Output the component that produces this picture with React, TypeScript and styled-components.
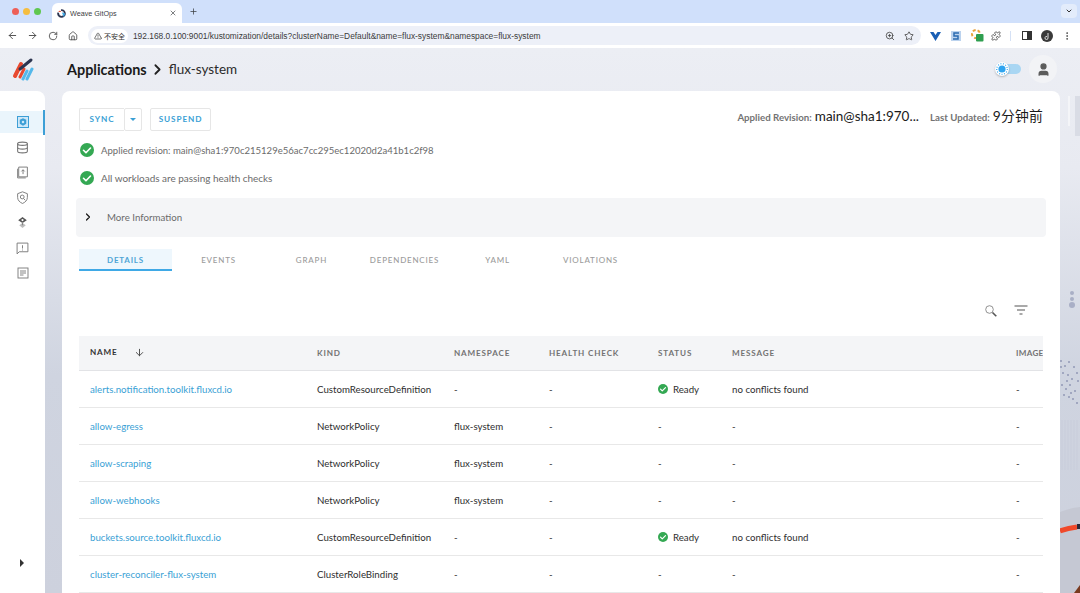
import styled, { createGlobalStyle } from "styled-components";
import {
  ArrowDown,
  ArrowLeft,
  ArrowRight,
  ChevronDown,
  ChevronRight,
  Database,
  Home,
  MoreVertical,
  Plus,
  RotateCw,
  Star,
  TriangleAlert,
  User,
  X,
  ZoomIn,
  Puzzle,
} from "lucide-react";

const GlobalStyle = createGlobalStyle`
html, body {
  margin: 0;
  padding: 0;
  width: 1080px;
  height: 593px;
  overflow: hidden;
  background: #e9ebf2;
}
* { box-sizing: border-box; }
`;

const Window = styled.div`
  width: 1080px;
  height: 593px;
  display: flex;
  flex-direction: column;
  overflow: hidden;
  font-family: "Lato", "Noto Sans CJK SC", sans-serif;
  color: #1a1a1a;
`;

const TabStrip = styled.div`
  height: 23px;
  flex: none;
  background: #d0e0fb;
  display: flex;
  align-items: flex-end;
  padding-left: 12px;
  position: relative;
`;

const Light = styled.span<{ $c: string }>`
  width: 7px;
  height: 7px;
  border-radius: 50%;
  background: ${(p) => p.$c};
  margin-right: 4px;
  align-self: center;
  flex: none;
`;

const ActiveTab = styled.div`
  width: 130px;
  height: 20px;
  margin-left: 7px;
  background: #fff;
  border-radius: 6px 6px 0 0;
  display: flex;
  align-items: center;
  padding: 0 5px 0 5px;
  font-family: "Liberation Sans", sans-serif;
  font-size: 7.2px;
  color: #3c4043;
`;

const TabTitle = styled.span`
  margin-left: 4px;
  flex: 1;
`;

const NewTab = styled.span`
  display: flex;
  align-self: center;
  margin-left: 7px;
  color: #3c4043;
`;

const TabMenu = styled.span`
  position: absolute;
  left: 1061px;
  top: 4px;
  width: 16px;
  height: 14px;
  background: #e3ecfb;
  border-radius: 4px;
  display: flex;
  align-items: center;
  justify-content: center;
  color: #333;
`;

const Toolbar = styled.div`
  height: 25px;
  flex: none;
  background: #fff;
  display: flex;
  align-items: center;
  padding-left: 2px;
`;

const NavButton = styled.span`
  width: 20.4px;
  display: flex;
  justify-content: center;
  color: #474747;
  flex: none;
`;

const Omnibox = styled.div`
  width: 833px;
  height: 19px;
  margin-left: 4.4px;
  background: #edf0f8;
  border-radius: 10px;
  display: flex;
  align-items: center;
  padding: 0 7px 0 3px;
  font-family: "Liberation Sans", sans-serif;
`;

const SecurityChip = styled.span`
  width: 37px;
  height: 14px;
  background: #fff;
  border-radius: 7px;
  display: flex;
  align-items: center;
  justify-content: center;
  gap: 2px;
  font-family: "Noto Sans CJK SC", sans-serif;
  font-size: 7px;
  color: #333;
`;

const Url = styled.span`
  margin-left: 5px;
  flex: 1;
  font-size: 8.4px;
  color: #3b3b3b;
  white-space: nowrap;
`;

const OmniIcon = styled.span`
  display: flex;
  margin-left: 9px;
  color: #444;
`;

const Extensions = styled.div`
  display: flex;
  align-items: center;
  margin-left: 4px;
`;

const ExtSlot = styled.span<{ $w?: number }>`
  width: ${(p) => p.$w ?? 21}px;
  display: flex;
  justify-content: center;
  align-items: center;
  color: #444;
`;

const Divider = styled.span`
  width: 1px;
  height: 10px;
  background: #d5e1f5;
  margin: 0 6px 0 5px;
`;

const Page = styled.div`
  flex: 1;
  min-height: 0;
  position: relative;
  display: flex;
  flex-direction: column;
  background: linear-gradient(180deg, #eceef4 0%, #e8eaf1 22%, #cfd4e0 60%, #cdd1dd 100%);
`;

const Backdrop = styled.svg`
  position: absolute;
  left: 1060px;
  top: 0;
`;

const Header = styled.header`
  height: 43px;
  flex: none;
  display: flex;
  align-items: center;
  padding: 0 23px 1px 12px;
`;

const Crumbs = styled.div`
  margin-left: 33px;
  flex: 1;
  display: flex;
  align-items: center;
  font-size: 14.4px;
`;

const CrumbStrong = styled.span`
  font-weight: 700;
  color: #1a1a1a;
`;

const CrumbLight = styled.span`
  margin-left: 3px;
  font-size: 13.5px;
  color: #2b2b2b;
`;

const CrumbArrow = styled.span`
  display: flex;
  margin-left: 2px;
  color: #222;
`;

const Toggle = styled.span`
  width: 20px;
  height: 10px;
  background: #a9d6f3;
  border-radius: 5px;
  position: relative;
  margin-right: 8px;
`;

const ToggleKnob = styled.span`
  position: absolute;
  left: -6px;
  top: -2px;
  width: 14px;
  height: 14px;
  border-radius: 50%;
  background: #fff;
  box-shadow: 0 1px 2px rgba(0, 0, 0, 0.25);
  display: flex;
  align-items: center;
  justify-content: center;
`;

const Avatar = styled.span`
  width: 28px;
  height: 28px;
  border-radius: 50%;
  background: #f2f3f6;
  display: flex;
  align-items: center;
  justify-content: center;
  color: #5b5b5b;
`;

const Body = styled.div`
  flex: 1;
  min-height: 0;
  display: flex;
  position: relative;
`;

const Sidebar = styled.nav`
  width: 45px;
  flex: none;
  background: #fff;
  border-radius: 0 8px 0 0;
  padding-top: 18.5px;
  position: relative;
`;

const NavItem = styled.div<{ $active?: boolean }>`
  height: 25.2px;
  width: 45px;
  display: flex;
  align-items: center;
  justify-content: center;
  color: #777;
  ${(p) =>
    p.$active &&
    `
    background: linear-gradient(#eaf5fc, #eaf5fc) no-repeat 0 1.5px / 100% 22px;
    border-right: 2px solid #3d9fd6;
    padding-left: 2px;
    color: #3d9fd6;
  `}
`;

const Collapse = styled.span`
  position: absolute;
  left: 20px;
  bottom: 26px;
  width: 0;
  height: 0;
  border-left: 4px solid #333;
  border-top: 4px solid transparent;
  border-bottom: 4px solid transparent;
`;

const Card = styled.main`
  width: 998px;
  margin-left: 17px;
  background: #fff;
  border-radius: 8px 8px 0 0;
  padding: 17px 17px 0;
  overflow: hidden;
  display: flex;
  flex-direction: column;
`;

const TopRow = styled.div`
  display: flex;
  align-items: flex-start;
  justify-content: space-between;
  height: 23px;
  flex: none;
`;

const Actions = styled.div`
  display: flex;
`;

const ActionButton = styled.button<{ $w: number; $joined?: boolean }>`
  width: ${(p) => p.$w}px;
  height: 23px;
  padding: 0 0 1px;
  background: #fff;
  border: 1px solid #e6e6e6;
  border-radius: ${(p) => (p.$joined ? "2px 0 0 2px" : "2px")};
  border-right-width: ${(p) => (p.$joined ? 0 : 1)}px;
  color: #3a9fd5;
  font-family: inherit;
  font-size: 8.2px;
  font-weight: 700;
  letter-spacing: 0.9px;
  display: flex;
  align-items: center;
  justify-content: center;
`;

const Caret = styled(ActionButton)`
  border-left: 1px solid #e6e6e6;
  margin-right: 8px;
`;

const CaretMark = styled.span`
  width: 0;
  height: 0;
  border-left: 3px solid transparent;
  border-right: 3px solid transparent;
  border-top: 3px solid #3a9fd5;
`;

const Meta = styled.div`
  display: flex;
  align-items: baseline;
  gap: 11px;
  margin-top: -3px;
`;

const MetaItem = styled.span`
  display: flex;
  align-items: baseline;
  gap: 3px;
`;

const MetaLabel = styled.span`
  font-size: 9.7px;
  font-weight: 700;
  color: #737373;
`;

const MetaValue = styled.span`
  font-size: 13.5px;
  color: #1a1a1a;
  white-space: nowrap;
`;

const MetaTime = styled(MetaValue)`
  font-size: 13.8px;
  letter-spacing: 0.2px;
`;

const StatusList = styled.div`
  display: flex;
  flex-direction: column;
  flex: none;
  margin-top: 5px;
`;

const StatusRow = styled.div<{ $size: number }>`
  height: 28px;
  display: flex;
  align-items: center;
  gap: 7px;
  padding-left: 1px;
  font-size: ${(p) => p.$size}px;
  color: #6b6b6b;
`;

const MoreInfo = styled.div`
  height: 39px;
  flex: none;
  margin: 6px -3px 0;
  background: #f4f5f7;
  border-radius: 4px;
  display: flex;
  align-items: center;
  padding: 0 0 2px 6px;
  gap: 13px;
  font-size: 9.7px;
  color: #6b6b6b;
`;

const MoreArrow = styled.span`
  display: flex;
  color: #1a1a1a;
`;

const Tabs = styled.div`
  display: flex;
  flex: none;
  margin-top: 12px;
`;

const TabItem = styled.div<{ $active?: boolean }>`
  width: 93px;
  height: 22px;
  padding-top: 2px;
  display: flex;
  align-items: center;
  justify-content: center;
  font-size: 8px;
  font-weight: ${(p) => (p.$active ? 700 : 500)};
  letter-spacing: 0.8px;
  color: ${(p) => (p.$active ? "#4fa5d6" : "#9b9b9b")};
  background: ${(p) => (p.$active ? "#eef7fd" : "transparent")};
  border-bottom: 2px solid ${(p) => (p.$active ? "#3fa9e6" : "transparent")};
`;

const TableTools = styled.div`
  height: 65px;
  flex: none;
  display: flex;
  align-items: flex-start;
  justify-content: flex-end;
  gap: 17px;
  padding: 34px 15px 0 0;
`;

const TableClip = styled.div`
  overflow: hidden;
  flex: none;
`;

const Table = styled.table`
  width: 1025px;
  table-layout: fixed;
  border-collapse: collapse;
  font-size: 9.7px;
`;

const HeadRow = styled.tr`
  height: 34px;
  background: #f4f5f7;
  border-bottom: 1px solid #e2e3e6;
`;

const Th = styled.th<{ $w: number; $dark?: boolean; $tight?: boolean }>`
  width: ${(p) => p.$w}px;
  padding: 0 0 0 11px;
  text-align: left;
  font-size: 8.1px;
  font-weight: 700;
  letter-spacing: ${(p) => (p.$tight ? 0.3 : 0.85)}px;
  color: ${(p) => (p.$dark ? "#333" : "#737373")};
  white-space: nowrap;
`;

const SortArrow = styled.span`
  display: inline-flex;
  vertical-align: middle;
  margin-left: 16px;
  color: #444;
`;

const Row = styled.tr`
  height: 37px;
  border-bottom: 1px solid #e8e8e8;
`;

const Td = styled.td`
  padding: 0 0 0 11px;
  color: #2e2e2e;
  white-space: nowrap;
`;

const NameLink = styled.a`
  color: #3a9fd5;
  text-decoration: none;
`;

const Ready = styled.span`
  display: inline-flex;
  align-items: center;
  vertical-align: middle;
  gap: 5px;
`;

function CheckCircle({ size }: { size: number }) {
  return (
    <svg width={size} height={size} viewBox="0 0 24 24">
      <circle cx="12" cy="12" r="12" fill="#34a853" />
      <path d="M6 12.5l4.2 4.2L18 8.6" fill="none" stroke="#fff" strokeWidth="2.8" strokeLinecap="round" strokeLinejoin="round" />
    </svg>
  );
}

function Logo() {
  return (
    <svg width="22" height="24" viewBox="0 0 22 24" fill="none" strokeLinecap="round">
      <path d="M3 19l6-12" stroke="#e8492f" strokeWidth="4" />
      <path d="M8 20l4-8" stroke="#e8492f" strokeWidth="3" />
      <path d="M8 12L19 3" stroke="#2d3550" strokeWidth="3" />
      <path d="M11 22l4-8" stroke="#55b8ea" strokeWidth="3" />
      <path d="M15 22l5-10" stroke="#55b8ea" strokeWidth="3" />
    </svg>
  );
}

function Favicon() {
  return (
    <svg width="9" height="9" viewBox="0 0 24 24">
      <circle cx="12" cy="12" r="9" fill="none" stroke="#2d3550" strokeWidth="5" strokeDasharray="30 10" />
      <path d="M13 9l9 3-4 9z" fill="#3fa9e6" />
      <path d="M3 8l5-4 3 4z" fill="#e8492f" />
    </svg>
  );
}

function KubeIcon() {
  return (
    <svg width="12" height="12" viewBox="0 0 24 24">
      <rect x="1" y="1" width="22" height="22" fill="#cfe8f8" stroke="#3d9fd6" strokeWidth="2" />
      <path d="M12 4.5l6.500 3.200v7.600L12 19.500l-6.500-4.200V7.700z" fill="#3d9fd6" />
      <circle cx="12" cy="12" r="2.5" fill="#cfe8f8" />
    </svg>
  );
}

function UploadDoc() {
  return (
    <svg width="13" height="13" viewBox="0 0 24 24" fill="none" stroke="currentColor" strokeWidth="1.7">
      <path d="M5 2h16v18H5z" />
      <path d="M3 5v17h15" />
      <path d="M13 15V7M10 10l3-3 3 3" />
    </svg>
  );
}

function ShieldIcon() {
  return (
    <svg width="13" height="13" viewBox="0 0 24 24" fill="none" stroke="currentColor" strokeWidth="1.7">
      <path d="M12 1.5l9 3.500v7c0 5-4 9-9 11-5-2-9-6-9-11V5z" />
      <circle cx="11.5" cy="11" r="3.5" />
      <path d="M14 14l3 3" />
    </svg>
  );
}

function FluxIcon() {
  return (
    <svg width="13" height="13" viewBox="0 0 24 24">
      <path d="M12 2l8 6-8 5-8-5z" fill="#555" />
      <circle cx="12" cy="7.5" r="2" fill="#fff" />
      <path d="M12 13l6 4-6 5-6-5z" fill="#bdbdbd" />
      <rect x="11" y="11" width="2" height="6" fill="#888" />
    </svg>
  );
}

function AlertBubble() {
  return (
    <svg width="13" height="13" viewBox="0 0 24 24" fill="none" stroke="currentColor" strokeWidth="1.7">
      <path d="M2 2h20v16H6l-4 4z" />
      <path d="M12 6v6M12 14v1.6" />
    </svg>
  );
}

function NotesIcon() {
  return (
    <svg width="12" height="12" viewBox="0 0 24 24" fill="none" stroke="currentColor" strokeWidth="1.8">
      <rect x="2" y="2" width="20" height="20" />
      <path d="M6 8h12M6 12h12M6 16h7" />
    </svg>
  );
}

function SearchIcon() {
  return (
    <svg width="12" height="12" viewBox="0 0 12 12" fill="none">
      <circle cx="4.5" cy="4.5" r="3.8" stroke="#777" strokeWidth="0.8" />
      <path d="M7.5 7.5l3.800 3.800" stroke="#555" strokeWidth="1.6" />
    </svg>
  );
}

function FilterIcon() {
  return (
    <svg width="14" height="10" viewBox="0 0 14 10" fill="none" stroke="#555" strokeWidth="1.1">
      <path d="M0.5 1h13M3 5h8M5.500 9h3" />
    </svg>
  );
}

function Sun() {
  return (
    <svg width="12" height="12" viewBox="0 0 20 20">
      <circle cx="10" cy="10" r="6" fill="#2fa4ef" />
      <circle cx="10" cy="10" r="8.8" fill="none" stroke="#2fa4ef" strokeWidth="2" strokeDasharray="1.6 2.6" />
    </svg>
  );
}

const rows = [
  { name: "alerts.notification.toolkit.fluxcd.io", kind: "CustomResourceDefinition", ns: "-", ready: true },
  { name: "allow-egress", kind: "NetworkPolicy", ns: "flux-system", ready: false },
  { name: "allow-scraping", kind: "NetworkPolicy", ns: "flux-system", ready: false },
  { name: "allow-webhooks", kind: "NetworkPolicy", ns: "flux-system", ready: false },
  { name: "buckets.source.toolkit.fluxcd.io", kind: "CustomResourceDefinition", ns: "-", ready: true },
  { name: "cluster-reconciler-flux-system", kind: "ClusterRoleBinding", ns: "-", ready: false },
];

const dots = [
  [1, 238], [5, 243], [9, 239], [14, 244], [3, 250], [8, 252], [12, 256], [17, 250], [2, 262], [6, 266],
  [10, 262], [15, 268], [18, 258], [4, 272], [9, 274], [13, 276], [17, 280], [1, 244], [7, 258], [11, 270],
];

export default function App() {
  return (
    <Window>
      <GlobalStyle />
      <TabStrip>
        <Light $c="#ee5f57" />
        <Light $c="#f5bd3f" />
        <Light $c="#5fc74f" />
        <ActiveTab>
          <Favicon />
          <TabTitle>Weave GitOps</TabTitle>
          <X size={8} />
        </ActiveTab>
        <NewTab>
          <Plus size={9} />
        </NewTab>
        <TabMenu>
          <ChevronDown size={8} strokeWidth={3} />
        </TabMenu>
      </TabStrip>
      <Toolbar>
        <NavButton><ArrowLeft size={11} /></NavButton>
        <NavButton><ArrowRight size={11} /></NavButton>
        <NavButton><RotateCw size={10} /></NavButton>
        <NavButton><Home size={10} /></NavButton>
        <Omnibox>
          <SecurityChip>
            <TriangleAlert size={8} />
            不安全
          </SecurityChip>
          <Url>192.168.0.100:9001/kustomization/details?clusterName=Default&amp;name=flux-system&amp;namespace=flux-system</Url>
          <OmniIcon><ZoomIn size={10} /></OmniIcon>
          <OmniIcon><Star size={10} /></OmniIcon>
        </Omnibox>
        <Extensions>
          <ExtSlot>
            <svg width="11" height="10" viewBox="0 0 11 10">
              <path d="M0 1h3.5l2 3 2-3H11L5.5 10z" fill="#1a5fb4" />
            </svg>
          </ExtSlot>
          <ExtSlot>
            <svg width="10" height="10" viewBox="0 0 10 10">
              <rect width="10" height="10" fill="#bcd3ee" />
              <path d="M8 2H3v3h4v3H2" fill="none" stroke="#2a6bb0" strokeWidth="1.5" />
            </svg>
          </ExtSlot>
          <ExtSlot>
            <svg width="13" height="13" viewBox="0 0 13 13">
              <circle cx="5" cy="5" r="4" fill="none" stroke="#e8a33d" strokeWidth="2" strokeDasharray="3 2" />
              <rect x="5" y="5" width="7.5" height="7.5" rx="1" fill="#2e9e4f" />
            </svg>
          </ExtSlot>
          <ExtSlot $w={17}><Puzzle size={10} /></ExtSlot>
          <Divider />
          <ExtSlot $w={20}>
            <svg width="10" height="9" viewBox="0 0 10 9">
              <rect x="0.5" y="0.5" width="9" height="8" fill="none" stroke="#333" />
              <rect x="5" y="0.5" width="4.5" height="8" fill="#333" />
            </svg>
          </ExtSlot>
          <ExtSlot $w={20}>
            <svg width="12" height="12" viewBox="0 0 12 12">
              <circle cx="6" cy="6" r="6" fill="#3a3a3a" />
              <path d="M7 3v5a1.5 1.5 0 1 1-1-1.4" fill="none" stroke="#ddd" />
            </svg>
          </ExtSlot>
          <ExtSlot $w={20}><MoreVertical size={10} /></ExtSlot>
        </Extensions>
      </Toolbar>
      <Page>
        <Backdrop width="20" height="545" viewBox="0 0 20 545">
          <rect x="8" y="48" width="2" height="30" fill="#f4f5f8" />
          <rect x="15" y="48" width="5" height="40" fill="#d9dce5" />
          <circle cx="12" cy="245" r="2" fill="#a9afc6" />
          <circle cx="12" cy="251" r="2" fill="#a9afc6" />
          <circle cx="12" cy="257" r="3" fill="#a9afc6" />
          {dots.map(([x, y]) => (
            <circle key={`${x}-${y}`} cx={x} cy={y + 75} r="1" fill="#9299b6" />
          ))}
          <path d="M2 372v50M5 372v50M8 372v50M11 372v50M14 372v50M17 372v50" stroke="#c2c6d4" strokeWidth="0.5" />
          <path d="M0 464q10-4 20-5v86H0z" fill="#c5c8d3" />
          <path d="M0 483q8-3 17-4" stroke="#f0492a" strokeWidth="5" fill="none" />
          <rect x="17" y="476" width="3" height="5" fill="#2a2a3a" />
          <path d="M14 545l6-8v8z" fill="#7a3a1f" />
        </Backdrop>
        <Header>
          <Logo />
          <Crumbs>
            <CrumbStrong>Applications</CrumbStrong>
            <CrumbArrow><ChevronRight size={17} strokeWidth={2.5} /></CrumbArrow>
            <CrumbLight>flux-system</CrumbLight>
          </Crumbs>
          <Toggle>
            <ToggleKnob><Sun /></ToggleKnob>
          </Toggle>
          <Avatar><User size={15} fill="currentColor" /></Avatar>
        </Header>
        <Body>
          <Sidebar>
            <NavItem $active><KubeIcon /></NavItem>
            <NavItem><Database size={13} /></NavItem>
            <NavItem><UploadDoc /></NavItem>
            <NavItem><ShieldIcon /></NavItem>
            <NavItem><FluxIcon /></NavItem>
            <NavItem><AlertBubble /></NavItem>
            <NavItem><NotesIcon /></NavItem>
            <Collapse />
          </Sidebar>
          <Card>
            <TopRow>
              <Actions>
                <ActionButton $w={45} $joined>SYNC</ActionButton>
                <Caret $w={18}><CaretMark /></Caret>
                <ActionButton $w={61}>SUSPEND</ActionButton>
              </Actions>
              <Meta>
                <MetaItem>
                  <MetaLabel>Applied Revision:</MetaLabel>
                  <MetaValue>main@sha1:970...</MetaValue>
                </MetaItem>
                <MetaItem>
                  <MetaLabel>Last Updated:</MetaLabel>
                  <MetaTime>9分钟前</MetaTime>
                </MetaItem>
              </Meta>
            </TopRow>
            <StatusList>
              <StatusRow $size={9.55}>
                <CheckCircle size={14} />
                Applied revision: main@sha1:970c215129e56ac7cc295ec12020d2a41b1c2f98
              </StatusRow>
              <StatusRow $size={9.95}>
                <CheckCircle size={14} />
                All workloads are passing health checks
              </StatusRow>
            </StatusList>
            <MoreInfo>
              <MoreArrow><ChevronRight size={12} strokeWidth={2.5} /></MoreArrow>
              More Information
            </MoreInfo>
            <Tabs>
              <TabItem $active>DETAILS</TabItem>
              <TabItem>EVENTS</TabItem>
              <TabItem>GRAPH</TabItem>
              <TabItem>DEPENDENCIES</TabItem>
              <TabItem>YAML</TabItem>
              <TabItem>VIOLATIONS</TabItem>
            </Tabs>
            <TableTools>
              <SearchIcon />
              <FilterIcon />
            </TableTools>
            <TableClip>
              <Table>
                <thead>
                  <HeadRow>
                    <Th $w={227} $dark>
                      NAME
                      <SortArrow><ArrowDown size={11} /></SortArrow>
                    </Th>
                    <Th $w={137}>KIND</Th>
                    <Th $w={95}>NAMESPACE</Th>
                    <Th $w={109}>HEALTH CHECK</Th>
                    <Th $w={74}>STATUS</Th>
                    <Th $w={284}>MESSAGE</Th>
                    <Th $w={99} $tight>IMAGE</Th>
                  </HeadRow>
                </thead>
                <tbody>
                  {rows.map((r) => (
                    <Row key={r.name}>
                      <Td><NameLink href="#">{r.name}</NameLink></Td>
                      <Td>{r.kind}</Td>
                      <Td>{r.ns}</Td>
                      <Td>-</Td>
                      <Td>
                        {r.ready ? (
                          <Ready>
                            <CheckCircle size={10} />
                            Ready
                          </Ready>
                        ) : (
                          "-"
                        )}
                      </Td>
                      <Td>{r.ready ? "no conflicts found" : "-"}</Td>
                      <Td>-</Td>
                    </Row>
                  ))}
                </tbody>
              </Table>
            </TableClip>
          </Card>
        </Body>
      </Page>
    </Window>
  );
}
